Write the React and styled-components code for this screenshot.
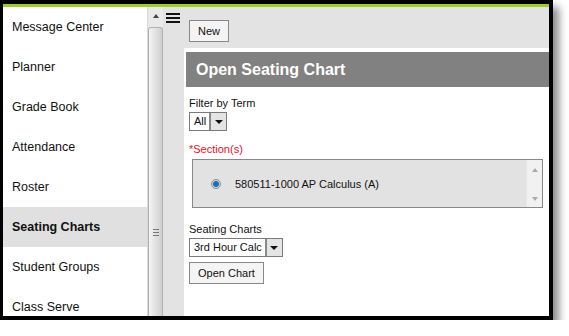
import React from "react";
import styled, { createGlobalStyle } from "styled-components";

const Global = createGlobalStyle`
  html, body { margin: 0; padding: 0; background: #fff; }
  body { font-family: "Liberation Sans", Arial, sans-serif; }
  * { box-sizing: border-box; }
`;

const Frame = styled.div`
  width: 553px;
  height: 320px;
  border-style: solid;
  border-color: #000;
  border-width: 4px 4px 4px 3px;
  box-shadow: 6px 7px 8px rgba(0,0,0,0.45);
  display: flex;
  flex-direction: column;
  overflow: hidden;
`;

const GreenBar = styled.div`
  height: 3px;
  background: #9ecb2f;
  flex: none;
`;

const Body = styled.div`
  flex: 1;
  display: flex;
  min-height: 0;
`;

const Sidebar = styled.nav`
  width: 144px;
  background: #fff;
  display: flex;
  flex-direction: column;
`;

const NavItem = styled.div`
  height: 40px;
  flex: none;
  display: flex;
  align-items: center;
  padding-left: 9px;
  font-size: 12.5px;
  color: #111;
  font-weight: ${p => (p.$active ? "bold" : "normal")};
  background: ${p => (p.$active ? "#e0e0e0" : "transparent")};
`;

const ScrollTrack = styled.div`
  width: 16px;
  background: #e9e9e9;
  border-left: 1px solid #d8d8d8;
  display: flex;
  flex-direction: column;
  align-items: center;
`;

const UpArrow = styled.div`
  margin-top: 7px;
  width: 0;
  height: 0;
  border-left: 3px solid transparent;
  border-right: 3px solid transparent;
  border-bottom: 4px solid #444;
  flex: none;
`;

const Thumb = styled.div`
  margin-top: 9px;
  width: 15px;
  flex: 1;
  border: 1px solid #b0b0b0;
  border-bottom: none;
  border-radius: 3px 3px 0 0;
  background: linear-gradient(to right, #f4f4f4, #e2e2e2 50%, #cfcfcf);
  display: flex;
  flex-direction: column;
  align-items: center;
  padding-top: 201px;
  gap: 2px;
`;

const Grip = styled.div`
  width: 6px;
  height: 1px;
  background: #777;
`;

const Main = styled.div`
  flex: 1;
  background: #e3e3e3;
  display: flex;
  flex-direction: column;
  min-width: 0;
`;

const Toolbar = styled.div`
  height: 41px;
  flex: none;
  display: flex;
  align-items: flex-start;
  padding: 6px 0 0 3px;
  gap: 9px;
`;

const Hamburger = styled.div`
  width: 14px;
  display: flex;
  flex-direction: column;
  gap: 2px;
`;

const Bar = styled.div`
  height: 2px;
  background: #111;
`;

const Button = styled.button`
  font-family: "Liberation Sans", Arial, sans-serif;
  font-size: 11px;
  color: #111;
  background: #f4f4f4;
  border: 1px solid #888;
  padding: 0 8px;
  height: 22px;
  margin-top: ${p => p.$mt || 0}px;
  cursor: pointer;
`;

const Panel = styled.div`
  flex: 1;
  margin-left: 21px;
  background: #fff;
  display: flex;
  flex-direction: column;
  padding: 4px 0 0 2px;
`;

const Header = styled.div`
  height: 35px;
  flex: none;
  background: #818181;
  color: #fff;
  font-size: 16px;
  font-weight: bold;
  display: flex;
  align-items: center;
  padding-left: 10px;
`;

const Form = styled.div`
  display: flex;
  flex-direction: column;
  align-items: flex-start;
  padding: 9px 6px 0 3px;
`;

const Label = styled.div`
  font-size: 11px;
  color: ${p => (p.$required ? "#e8102a" : "#111")};
  line-height: 14px;
  margin-top: ${p => p.$mt || 0}px;
`;

const Select = styled.div`
  margin-top: 2px;
  height: 19px;
  display: flex;
  border: 1px solid #7a7a7a;
  background: #fff;
`;

const SelectText = styled.span`
  font-size: 11px;
  color: #111;
  padding: 0 3px 0 4px;
  line-height: 17px;
`;

const SelectBtn = styled.span`
  width: 17px;
  border-left: 2px solid #888;
  background: #e4e4e4;
  display: flex;
  align-items: center;
  justify-content: center;
  &::after {
    content: "";
    border-left: 4px solid transparent;
    border-right: 4px solid transparent;
    border-top: 4px solid #111;
  }
`;

const SectionBox = styled.div`
  margin: 3px 0 0 3px;
  align-self: stretch;
  height: 49px;
  border: 1px solid #888;
  background: #e2e2e2;
  display: flex;
`;

const SectionList = styled.div`
  flex: 1;
  display: flex;
  align-items: center;
  padding-left: 18px;
  gap: 14px;
  font-size: 11px;
  color: #111;
`;

const Radio = styled.span`
  width: 10px;
  height: 10px;
  border-radius: 50%;
  border: 1px solid #8a8a8a;
  background: radial-gradient(circle, #1a6fb8 0 2.5px, #cfd8e0 3.5px);
  flex: none;
`;

const InnerScroll = styled.div`
  width: 16px;
  background: #f1f1f1;
  border-left: 1px solid #e6e6e6;
  display: flex;
  flex-direction: column;
  justify-content: space-between;
  align-items: center;
  padding: 8px 0 6px;
`;

const Arrow = styled.span`
  width: 0;
  height: 0;
  border-left: 3px solid transparent;
  border-right: 3px solid transparent;
  ${p => (p.$down ? "border-top: 4px solid #aaa;" : "border-bottom: 4px solid #aaa;")}
`;

const navItems = [
  "Message Center",
  "Planner",
  "Grade Book",
  "Attendance",
  "Roster",
  "Seating Charts",
  "Student Groups",
  "Class Serve",
];

export default function App() {
  return (
    <>
      <Global />
      <Frame>
        <GreenBar />
        <Body>
          <Sidebar>
            {navItems.map(n => (
              <NavItem key={n} $active={n === "Seating Charts"}>
                {n}
              </NavItem>
            ))}
          </Sidebar>
          <ScrollTrack>
            <UpArrow />
            <Thumb>
              <Grip />
              <Grip />
              <Grip />
            </Thumb>
          </ScrollTrack>
          <Main>
            <Toolbar>
              <Hamburger>
                <Bar />
                <Bar />
                <Bar />
              </Hamburger>
              <Button $mt={7}>New</Button>
            </Toolbar>
            <Panel>
              <Header>Open Seating Chart</Header>
              <Form>
                <Label>Filter by Term</Label>
                <Select>
                  <SelectText>All</SelectText>
                  <SelectBtn />
                </Select>
                <Label $required $mt={11}>*Section(s)</Label>
                <SectionBox>
                  <SectionList>
                    <Radio />
                    <span>580511-1000 AP Calculus (A)</span>
                  </SectionList>
                  <InnerScroll>
                    <Arrow />
                    <Arrow $down />
                  </InnerScroll>
                </SectionBox>
                <Label $mt={14}>Seating Charts</Label>
                <Select>
                  <SelectText>3rd Hour Calc</SelectText>
                  <SelectBtn />
                </Select>
                <Button $mt={5}>Open Chart</Button>
              </Form>
            </Panel>
          </Main>
        </Body>
      </Frame>
    </>
  );
}
